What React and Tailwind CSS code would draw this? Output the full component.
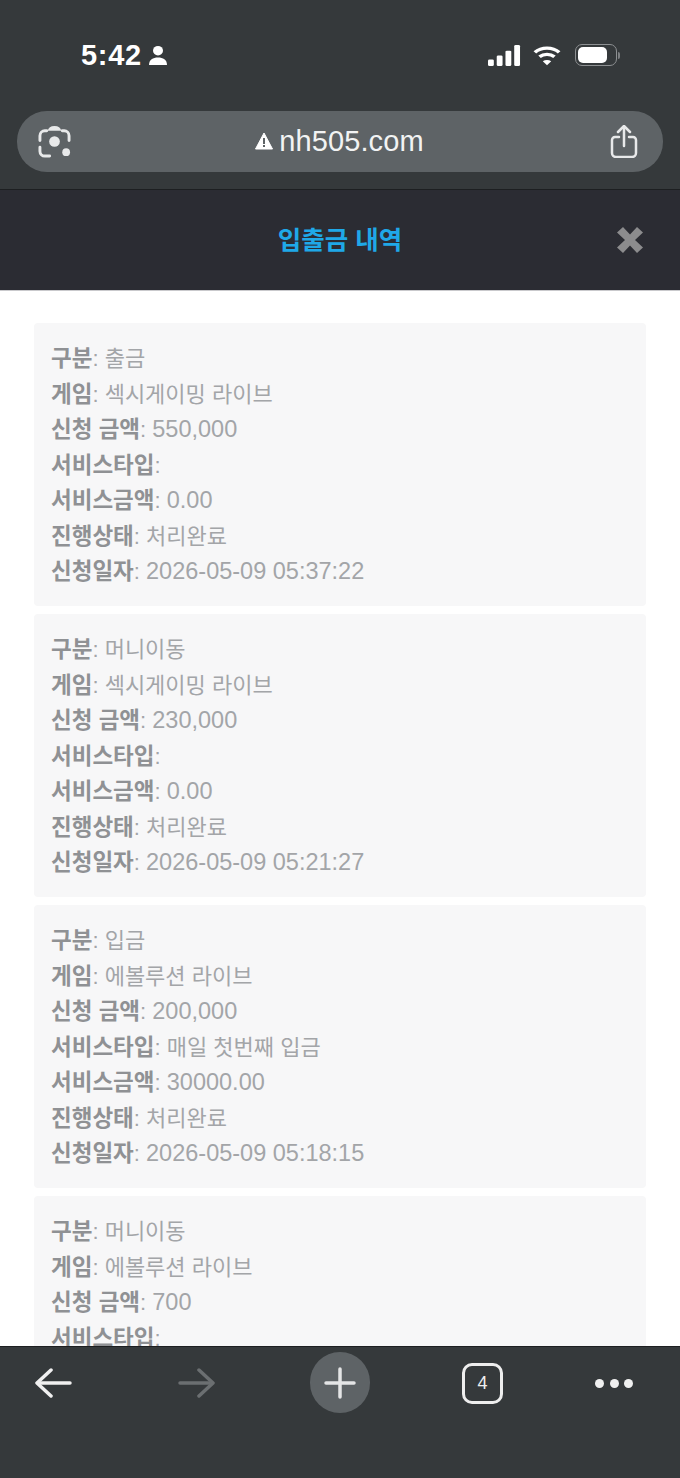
import React from 'react'

const records = [
  [['구분', '출금'], ['게임', '섹시게이밍 라이브'], ['신청 금액', '550,000'], ['서비스타입', ''], ['서비스금액', '0.00'], ['진행상태', '처리완료'], ['신청일자', '2026-05-09 05:37:22']],
  [['구분', '머니이동'], ['게임', '섹시게이밍 라이브'], ['신청 금액', '230,000'], ['서비스타입', ''], ['서비스금액', '0.00'], ['진행상태', '처리완료'], ['신청일자', '2026-05-09 05:21:27']],
  [['구분', '입금'], ['게임', '에볼루션 라이브'], ['신청 금액', '200,000'], ['서비스타입', '매일 첫번째 입금'], ['서비스금액', '30000.00'], ['진행상태', '처리완료'], ['신청일자', '2026-05-09 05:18:15']],
  [['구분', '머니이동'], ['게임', '에볼루션 라이브'], ['신청 금액', '700'], ['서비스타입', '']],
]

function StatusBar() {
  return (
    <div className="flex items-center justify-between pl-[81px] pr-[60px] pt-[38px] h-[72px]">
      <div className="flex items-center gap-[6px]">
        <span className="text-[29px] leading-[34px] font-bold text-white tracking-[0.7px]">5:42</span>
        <svg width="20" height="21" viewBox="0 0 20 22" preserveAspectRatio="none" fill="#fff">
          <circle cx="10" cy="6" r="5" />
          <path d="M1 21c0-6 4-8 9-8s9 2 9 8z" />
        </svg>
      </div>
      <div className="flex items-center gap-[12px]">
        <svg width="33" height="21" viewBox="0 0 34 26" preserveAspectRatio="none" fill="#fff">
          <rect x="0" y="18" width="6" height="8" rx="1.500" />
          <rect x="9" y="13" width="6" height="13" rx="1.500" />
          <rect x="18" y="7" width="6" height="19" rx="1.500" />
          <rect x="27" y="0" width="6" height="26" rx="1.500" />
        </svg>
        <svg width="28" height="21" viewBox="0 0 30 26" preserveAspectRatio="none" fill="none" stroke="#fff" strokeWidth="4">
          <path d="M2 9c7-7 19-7 26 0" />
          <path d="M7 14.500c4.500-4 11.500-4 16 0" />
          <path d="M15 25l-4.500-5c2.500-2 6.500-2 9 0z" fill="#fff" stroke="none" />
        </svg>
        <div className="flex items-center gap-[1px] ml-[2px]">
          <div className="w-[42px] h-[22px] rounded-[7px] border border-[#8d9092] p-[2px]">
            <div className="w-[29px] h-full rounded-[5px] bg-white" />
          </div>
          <div className="w-[2px] h-[7px] rounded-r-sm bg-[#7d8082]" />
        </div>
      </div>
    </div>
  )
}

function AddressBar() {
  return (
    <div className="mx-[17px] mt-[39px] h-[61px] rounded-[30px] bg-[#5e6366] flex items-center justify-between pl-[21px] pr-[25px]">
      <svg width="33" height="33" viewBox="0 0 34 34" fill="none" stroke="#e8e9ea" strokeWidth="3" strokeLinecap="round">
        <path d="M9 6H7a5 5 0 0 0-5 5v5" />
        <path d="M25 6h2a5 5 0 0 1 5 5v5" />
        <path d="M2 23v4a5 5 0 0 0 5 5h5" />
        <path d="M10 6q1-5 7-5t7 5z" fill="#e8e9ea" stroke="none" />
        <circle cx="17" cy="17" r="5.500" fill="#e8e9ea" stroke="none" />
        <circle cx="29" cy="28" r="4" fill="#e8e9ea" stroke="none" />
      </svg>
      <div className="flex items-center gap-[6px] text-[#f2f3f3] mr-[2px] mb-[1px]">
        <svg width="18" height="18" viewBox="0 0 18 18">
          <path d="M9 1 17.500 17H.5z" fill="#fff" stroke="#fff" strokeLinejoin="round" />
          <rect x="8" y="6" width="2" height="6" fill="#5e6366" />
          <rect x="8" y="13" width="2" height="2" fill="#5e6366" />
        </svg>
        <span className="text-[29px] leading-[34px] tracking-[0.1px]">nh505.com</span>
      </div>
      <svg width="28" height="33" viewBox="0 0 28 33" fill="none" stroke="#e8e9ea" strokeWidth="2.500" strokeLinecap="round" strokeLinejoin="round">
        <path d="M14 21V2" />
        <path d="M8 7l6-6 6 6" />
        <path d="M9 12H5a3 3 0 0 0-3 3v13a4 4 0 0 0 4 4h16a4 4 0 0 0 4-4V15a3 3 0 0 0-3-3h-4" />
      </svg>
    </div>
  )
}

function Card({ rows }) {
  return (
    <div className="rounded-[4px] bg-[#f7f7f8] pt-[18px] pb-[16.500px] px-[17px] shrink-0">
      {rows.map(([label, value]) => (
        <div key={label} className="h-[35.500px] leading-[35.500px] text-[#a3a5a8] whitespace-nowrap">
          <span className="text-[22.500px] font-bold text-[#8f9194]">{label}</span>
          <span className="text-[22px]">: </span>
          <span className={/[가-힣]/.test(value) ? 'text-[22px]' : 'text-[23.500px]'}>{value}</span>
        </div>
      ))}
    </div>
  )
}

function BottomBar() {
  return (
    <div className="h-[132px] shrink-0 bg-[#35393b] border-t border-[#1d1f21] flex items-start pt-[5px] pl-[35px]">
      <svg className="mt-[16px] shrink-0" width="37" height="30" viewBox="0 0 37 30" fill="none" stroke="#f0f0f0" strokeWidth="3.500" strokeLinecap="round" strokeLinejoin="round">
        <path d="M3 15h32" />
        <path d="M16 2 2 15l14 13" />
      </svg>
      <svg className="mt-[16px] ml-[106px] shrink-0" width="38" height="30" viewBox="0 0 38 30" fill="none" stroke="#6b6f71" strokeWidth="3.500" strokeLinecap="round" strokeLinejoin="round">
        <path d="M2 15h32" />
        <path d="M21 2l14 13-14 13" />
      </svg>
      <div className="w-[60px] h-[61px] ml-[94px] shrink-0 rounded-full bg-[#5e6366] flex items-center justify-center">
        <svg width="32" height="32" viewBox="0 0 32 32" fill="none" stroke="#e4e5e6" strokeWidth="3.500" strokeLinecap="round">
          <path d="M2 16h28" />
          <path d="M16 2v28" />
        </svg>
      </div>
      <div className="w-[41px] h-[41px] ml-[92px] mt-[11px] shrink-0 rounded-[10px] border-[3px] border-[#eeeeee] flex items-center justify-center text-[18px] text-[#eeeeee]">4</div>
      <div className="flex gap-[5.500px] ml-[92px] mt-[27px] shrink-0">
        <div className="w-[9px] h-[9px] rounded-full bg-[#f0f0f0]" />
        <div className="w-[9px] h-[9px] rounded-full bg-[#f0f0f0]" />
        <div className="w-[9px] h-[9px] rounded-full bg-[#f0f0f0]" />
      </div>
    </div>
  )
}

export default function App() {
  return (
    <div className="w-[680px] h-[1478px] overflow-hidden flex flex-col bg-white [font-family:'Liberation_Sans','Noto_Sans_CJK_KR',sans-serif]">
      <div className="h-[190px] shrink-0 bg-[#35393b] border-b border-[#1d1f21]">
        <StatusBar />
        <AddressBar />
      </div>

      <div className="h-[101px] shrink-0 bg-[#2b2c33] border-b border-[#c9c9cc] relative flex items-center justify-center">
        <h1 className="text-[25.500px] font-bold text-[#1fa8e8]">입출금 내역</h1>
        <svg className="absolute right-[36px] top-[36px]" width="28" height="28" viewBox="0 0 28 30" preserveAspectRatio="none" fill="#8c8c8e">
          <path d="M1 7l6-6 7 8 7-8 6 6-8 8 8 8-6 6-7-8-7 8-6-6 8-8z" />
        </svg>
      </div>

      <div className="flex-1 min-h-0 overflow-hidden px-[34px] pt-[32px] flex flex-col gap-[8px]">
        {records.map((rows, i) => <Card key={i} rows={rows} />)}
      </div>

      <BottomBar />
    </div>
  )
}
